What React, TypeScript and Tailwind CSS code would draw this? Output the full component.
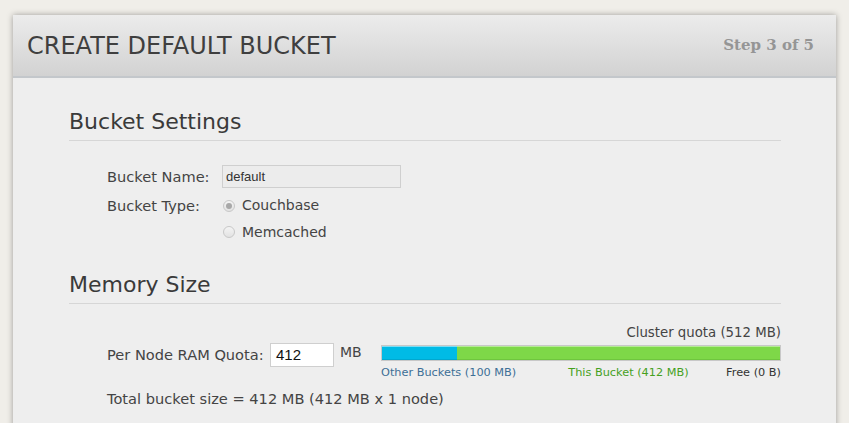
import React from "react";

function Radio({ checked }: { checked?: boolean }) {
  return (
    <span className="flex h-[12px] w-[12px] items-center justify-center rounded-full border border-[#c8c8c8] bg-gradient-to-b from-[#f4f4f4] to-[#e2e2e2]">
      {checked && <span className="h-[6px] w-[6px] rounded-full bg-[#a8a8a8]" />}
    </span>
  );
}

function App() {
  return (
    <div className="min-h-screen bg-[#f0eee9] px-[13px] pt-[15px] font-['DejaVu_Sans',sans-serif] text-[#444]">
      <div className="h-[420px] overflow-hidden bg-[#eeeeee] shadow-[0_0_6px_rgba(0,0,0,0.35)]">
        {/* header */}
        <div className="flex h-[63px] items-center justify-between border-b-2 border-[#c3c7cb] bg-gradient-to-b from-[#ececec] to-[#d2d2d2] pl-[14px] pr-[22px]">
          <h1 className="text-[24px] text-[#3f3f3f]">CREATE DEFAULT BUCKET</h1>
          <span className="font-['DejaVu_Serif',serif] text-[15px] font-bold text-[#959595]">Step 3 of 5</span>
        </div>

        <div className="pl-[56px] pr-[55px] pt-[27px]">
          {/* bucket settings */}
          <h2 className="border-b border-[#d6d6d6] pb-[2px] text-[22px] text-[#3a3a3a]">Bucket Settings</h2>
          <div className="pl-[38px] pt-[24px] text-[14px]">
            <div className="flex items-center">
              <span className="w-[115px] text-[14.6px]">Bucket Name:</span>
              <div className="flex h-[23px] w-[179px] items-center border border-[#cfcfcf] bg-[#ececec] px-[3px] font-['Liberation_Sans',sans-serif] text-[13px] text-[#333]">
                default
              </div>
            </div>
            <div className="mt-[7px] flex items-center">
              <span className="w-[115px] text-[14.6px]">Bucket Type:</span>
              <div className="flex items-center gap-[7px] pl-[1px]">
                <Radio checked />
                <span>Couchbase</span>
              </div>
            </div>
            <div className="mt-[5px] flex items-center pl-[116px]">
              <div className="flex items-center gap-[7px]">
                <Radio />
                <span>Memcached</span>
              </div>
            </div>
          </div>

          {/* memory size */}
          <h2 className="mt-[25px] border-b border-[#d6d6d6] pb-[2px] text-[22px] text-[#3a3a3a]">Memory Size</h2>
          <div className="pl-[38px] pt-[19px] text-[14.6px]">
            <div className="flex items-start">
              <div className="flex items-center pt-[20px]">
                <span className="w-[163px]">Per Node RAM Quota:</span>
                <div className="flex h-[24px] w-[64px] items-center border border-[#cfcfcf] bg-white px-[5px] font-['Liberation_Sans',sans-serif] text-[15px] text-[#111]">
                  412
                </div>
                <span className="ml-[6px] w-[41px] -translate-y-[2px] text-[14px]">MB</span>
              </div>
              <div className="flex-1">
                <div className="text-right text-[13.3px] text-[#444]">Cluster quota (512 MB)</div>
                <div className="mt-[2px] flex h-[16px] border border-[#c8c8c8] bg-[#e8e8e8]">
                  <div className="w-[75px] bg-[#00bbe6] shadow-[inset_0_1px_0_#7fdcf2,inset_0_-1px_0_#00a8d0]" />
                  <div className="flex-1 bg-[#7ed848] shadow-[inset_0_1px_0_#b5ea95,inset_0_-1px_0_#6fc63e]" />
                </div>
                <div className="mt-[4px] flex text-[11.3px]">
                  <span className="text-[#3d6f96]">Other Buckets (100 MB)</span>
                  <span className="ml-[52px] text-[#45a01e]">This Bucket (412 MB)</span>
                  <span className="ml-auto text-[#333]">Free (0 B)</span>
                </div>
              </div>
            </div>
            <div className="mt-[6px]">Total bucket size = 412 MB (412 MB x 1 node)</div>
          </div>
        </div>
      </div>
    </div>
  );
}

export default App;
